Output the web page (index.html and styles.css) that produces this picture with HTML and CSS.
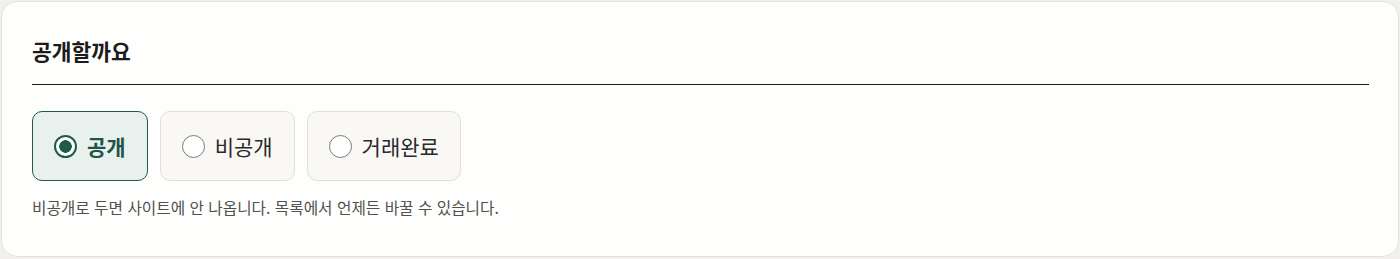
FILE: index.html
```html
<!DOCTYPE html>
<html lang="ko">

<head>
    <meta charset="UTF-8">
    <meta name="viewport" content="width=device-width, initial-scale=1.0">
    <title>공개 설정</title>
    <link rel="stylesheet" href="styles.css">
</head>

<body>
    <section class="card">
        <h2 class="card-title">공개할까요</h2>
        <form class="options">
            <label class="option selected">
                <input type="radio" name="visibility" value="public" checked>
                <span>공개</span>
            </label>
            <label class="option">
                <input type="radio" name="visibility" value="private">
                <span>비공개</span>
            </label>
            <label class="option">
                <input type="radio" name="visibility" value="done">
                <span>거래완료</span>
            </label>
        </form>
        <p class="help">비공개로 두면 사이트에 안 나옵니다. 목록에서 언제든 바꿀 수 있습니다.</p>
    </section>
</body>

</html>
```

FILE: styles.css
```css
* {
    box-sizing: border-box;
}

body {
    margin: 0;
    padding: 1px;
    background-color: #f1f0ec;
    font-family: "Noto Sans CJK KR", "Noto Sans", sans-serif;
    color: #222;
}

.card {
    background-color: #fefefd;
    border: 1px solid #e4e2dc;
    border-radius: 16px;
    padding: 34px 29px 28px 30px;
    height: 256px;
}

.card-title {
    margin: 0;
    padding-bottom: 18px;
    border-bottom: 1.5px solid #1e1e1e;
    font-size: 21.5px;
    line-height: 30px;
    font-weight: 700;
    color: #1c1c1c;
}

.options {
    display: flex;
    gap: 12px;
    margin-top: 26px;
}

.option {
    display: flex;
    align-items: center;
    gap: 10px;
    padding: 20px 21px;
    border: 1px solid #e2dfd9;
    border-radius: 10px;
    background-color: #faf8f5;
    font-size: 21px;
    line-height: 28px;
    color: #2a2a2a;
    cursor: pointer;
}

.option input {
    appearance: none;
    margin: 0;
    width: 23px;
    height: 23px;
    border: 1.5px solid #7a7a7a;
    border-radius: 50%;
    background-color: #fff;
}

.option.selected {
    border-color: #1f5b4b;
    background-color: #e9f1ee;
    color: #1f5446;
    font-weight: 700;
}

.option.selected input {
    border: 2px solid #1f5b4b;
    background: radial-gradient(circle, #1f5b4b 0 6px, #fff 6.5px);
}

.help {
    margin: 16px 0 0;
    font-size: 15.7px;
    line-height: 22px;
    color: #505050;
}
```
